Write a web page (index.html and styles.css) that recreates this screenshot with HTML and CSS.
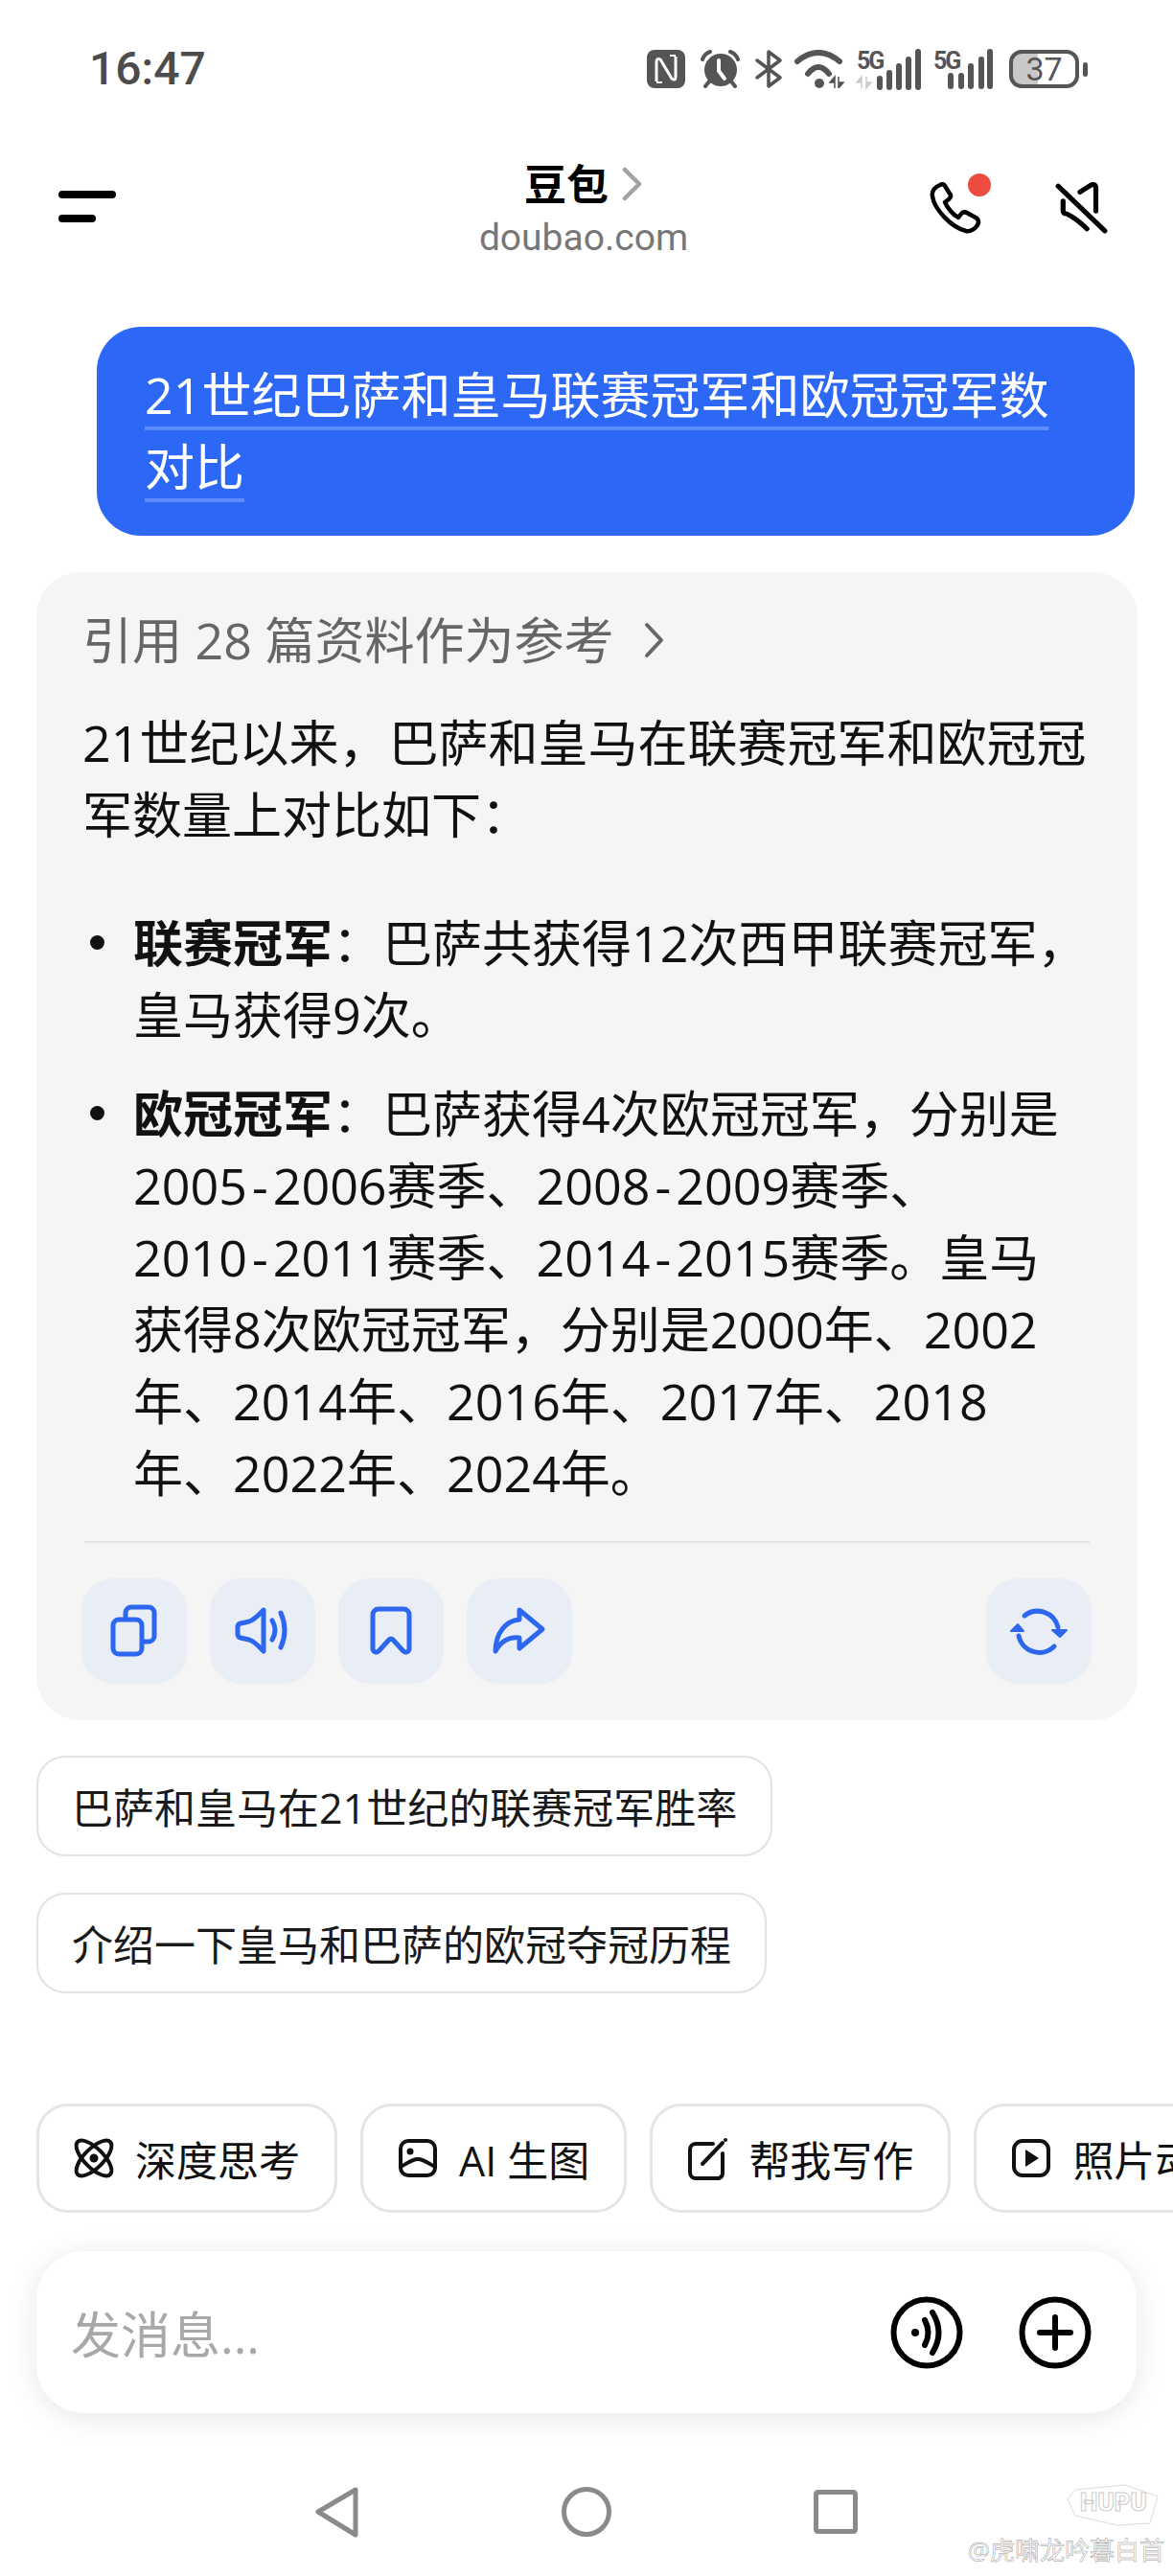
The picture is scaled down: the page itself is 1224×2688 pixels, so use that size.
FILE: index.html
```html
<!DOCTYPE html>
<html lang="zh">
<head>
    <meta charset="utf-8">
    <title>豆包</title>
    <link rel="stylesheet" href="styles.css">
</head>
<body>
    <div class="status">
        <span class="time">16:47</span>
        <div class="status-icons">
            <svg width="40" height="40" viewBox="0 0 40 40"><rect width="40" height="40" rx="8" fill="#555"/><path d="M10 33V13q0-5 4-3l12 20q4 3 4-2V7" fill="none" stroke="#fff" stroke-width="3"/><path d="M16 34h-6M24 6h6" stroke="#fff" stroke-width="2"/></svg>
            <svg width="47" height="40" viewBox="0 0 47 40"><circle cx="24" cy="21" r="17" fill="#555"/><path d="M5 10q2-6 8-8M42 10q-2-6-8-8M12 33l-4 5M35 33l4 5" fill="none" stroke="#555" stroke-width="4" stroke-linecap="round"/><path d="M22 11v11l6 8" fill="none" stroke="#fff" stroke-width="4" stroke-linecap="round"/></svg>
            <svg width="28" height="40" viewBox="0 0 28 40"><path d="M2 11l24 18-12 9V2l12 9L2 29" fill="none" stroke="#555" stroke-width="3.5" stroke-linejoin="round" stroke-linecap="round"/></svg>
            <svg width="52" height="40" viewBox="0 0 52 40"><path d="M3 12Q25-6 47 12M14 25Q25 11 36 25" fill="none" stroke="#555" stroke-width="6" stroke-linecap="round"/><circle cx="26" cy="35" r="5" fill="#555"/><path d="M42 40V28l-5 6h5M46 28v12l5-6h-5" fill="#555" stroke="#555" stroke-width="1.5"/></svg>
            <svg class="net-icon" width="67" height="40" viewBox="0 0 67 40"><text x="0" y="20" class="net">5G</text><path d="M5 40V28l-5 6h5M10 28v12l5-6h-5" fill="#ccc" stroke="#ccc" stroke-width="1.5"/><path d="M24 30v9M34 24v15M44 17v22M54 10v29M64 2v37" stroke="#555" stroke-width="6" stroke-linecap="round"/></svg>
            <svg class="net-icon" width="62" height="40" viewBox="0 0 62 40"><text x="0" y="20" class="net">5G</text><path d="M18 27v11M29 27v11M39 17v21M50 10v28M59 2v36" stroke="#555" stroke-width="6" stroke-linecap="round"/></svg>
            <div class="battery"><span>37</span></div>
            <div class="battery-nub"></div>
        </div>
    </div>

    <div class="topbar">
        <div class="menu"><span class="menu-long"></span><span class="menu-short"></span></div>
        <div class="title-box">
            <div class="title">豆包<svg width="22" height="36" viewBox="0 0 22 36"><path d="M3 3l15 15L3 33" fill="none" stroke="#a3a3a3" stroke-width="4.5" stroke-linecap="round" stroke-linejoin="round"/></svg></div>
            <div class="domain">doubao.com</div>
        </div>
        <div class="top-actions">
            <div class="phone">
                <svg width="54" height="54" viewBox="0 0 54 54"><path d="M11 3C6 5 2 9 3 15 5 28 22 47 38 51c6 1 12-4 13-9 0-3-1-4-3-5l-9-5c-2-1-4-1-6 1l-3 4C24 34 18 26 16 21l4-3c2-2 3-4 1-6L16 4c-1-2-3-2-5-1Z" fill="none" stroke="#000" stroke-width="4.5" stroke-linejoin="round"/></svg>
                <span class="red-dot"></span>
            </div>
            <svg width="56" height="56" viewBox="0 0 54 54"><path d="M3 5l47 45M25 11L36 4q5-2 5 3v23M8 20v10q0 3 4 3 10 5 20 15" fill="none" stroke="#000" stroke-width="5" stroke-linecap="round" stroke-linejoin="round"/></svg>
        </div>
    </div>

    <div class="bubble"><span class="bubble-text">21世纪巴萨和皇马联赛冠军和欧冠冠军数对比</span></div>

    <div class="card">
        <div class="refs">引用 28 篇资料作为参考<svg width="22" height="40" viewBox="0 0 22 40"><path d="M3 4l15 16L3 36" fill="none" stroke="#666" stroke-width="4" stroke-linecap="round" stroke-linejoin="round"/></svg></div>
        <p class="intro">21世纪以来&#xFF0C;巴萨和皇马在联赛冠军和欧冠冠军数量上对比如下&#xFF1A;</p>
        <ul class="answer">
            <li><b>联赛冠军</b>&#xFF1A;巴萨共获得12次西甲联赛冠军&#xFF0C;<br>皇马获得9次。</li>
            <li><b>欧冠冠军</b>&#xFF1A;巴萨获得4次欧冠冠军&#xFF0C;分别是<br>2005<span class="dash">-</span>2006赛季、2008<span class="dash">-</span>2009赛季、<br>2010<span class="dash">-</span>2011赛季、2014<span class="dash">-</span>2015赛季。皇马<br>获得8次欧冠冠军&#xFF0C;分别是2000年、2002<br>年、2014年、2016年、2017年、2018<br>年、2022年、2024年。</li>
        </ul>
        <div class="divider"></div>
        <div class="actions">
            <div class="act"><svg width="60" height="60" viewBox="0 0 60 60"><rect x="8" y="18" width="30" height="36" rx="6"/><path d="M21 15v-4a6 6 0 0 1 6-6h18a6 6 0 0 1 6 6v24a6 6 0 0 1-6 6h-6"/></svg></div>
            <div class="act"><svg width="60" height="60" viewBox="0 0 60 60"><path d="M31 8C27 12 22 18 16 20L7 22c-2 .5-3 2-3 4v7c0 2 1 3.500 3 4l9 2c6 2 11 8 15 12Z"/><path d="M40 19q6 10 0 20M49 11q8 18 0 36"/></svg></div>
            <div class="act"><svg width="60" height="60" viewBox="0 0 60 60"><path d="M11 48V13a6 6 0 0 1 6-6h26a6 6 0 0 1 6 6v35c0 4-4 5-6 3L32 39a2.500 2.500 0 0 0-4 0L17 51c-2 2-6 1-6-3Z"/></svg></div>
            <div class="act"><svg width="60" height="60" viewBox="0 0 60 60"><path d="M30 8l24 20-24 20V37C20 36 11 40 5 51 5 32 16 19 30 18Z"/></svg></div>
            <div class="act act-last"><svg width="60" height="60" viewBox="0 0 60 60"><path d="M15 14A22 22 0 0 1 50 26M46 46A22 22 0 0 1 9 35"/><path class="solid" d="M44 29h15l-7 7ZM1 30h13l-6-7Z"/></svg></div>
        </div>
    </div>

    <div class="suggest">
        <div class="suggest-chip">巴萨和皇马在21世纪的联赛冠军胜率</div>
        <div class="suggest-chip">介绍一下皇马和巴萨的欧冠夺冠历程</div>
    </div>

    <div class="tools">
        <div class="tool">
            <svg width="42" height="42" viewBox="0 0 42 42"><ellipse cx="21" cy="21" rx="10" ry="24" transform="rotate(45 21 21)"/><ellipse cx="21" cy="21" rx="10" ry="24" transform="rotate(-45 21 21)"/><circle class="fill" cx="21" cy="21" r="4.500"/></svg>
            <span>深度思考</span>
        </div>
        <div class="tool">
            <svg width="42" height="42" viewBox="0 0 42 42"><rect x="3" y="3" width="36" height="36" rx="8"/><circle class="fill" cx="13" cy="14" r="3.500"/><path d="M3 30c6-3 12-8 18-8s12 5 18 8"/></svg>
            <span>AI 生图</span>
        </div>
        <div class="tool">
            <svg width="42" height="42" viewBox="0 0 42 42"><path d="M27 6H9a6 6 0 0 0-6 6v24a6 6 0 0 0 6 6h24a6 6 0 0 0 4-6V16"/><path d="M16 27L37 5"/><circle class="fill" cx="40" cy="2" r="2"/></svg>
            <span>帮我写作</span>
        </div>
        <div class="tool">
            <svg width="42" height="42" viewBox="0 0 42 42"><rect x="3" y="3" width="36" height="36" rx="9"/><path class="fill" d="M15 12l14 9-14 9Z"/></svg>
            <span>照片动起来</span>
        </div>
    </div>

    <div class="input-box">
        <span class="placeholder">发消息...</span>
        <svg width="76" height="76" viewBox="0 0 76 76"><circle cx="38" cy="38" r="34.500" fill="none" stroke="#000" stroke-width="6"/><circle cx="26" cy="38" r="4"/><path d="M36 25q7 13 0 26M44 17q13 21 0 42" fill="none" stroke="#000" stroke-width="6" stroke-linecap="round"/></svg>
        <svg width="76" height="76" viewBox="0 0 76 76"><circle cx="38" cy="38" r="34.500" fill="none" stroke="#000" stroke-width="6"/><path d="M38 22v32M22 38h32" fill="none" stroke="#000" stroke-width="6" stroke-linecap="round"/></svg>
    </div>

    <div class="navbar">
        <svg width="60" height="60" viewBox="0 0 60 60"><path d="M49 7L10 30l39 24Z" fill="none" stroke="#8a8a8a" stroke-width="5" stroke-linejoin="round"/></svg>
        <svg width="60" height="60" viewBox="0 0 60 60"><circle cx="30" cy="30" r="23.500" fill="none" stroke="#8a8a8a" stroke-width="5"/></svg>
        <svg width="60" height="60" viewBox="0 0 60 60"><rect x="9.500" y="9.500" width="41" height="41" rx="2" fill="none" stroke="#8a8a8a" stroke-width="5"/></svg>
    </div>

    <div class="watermark">
        <svg class="hupu-logo" width="98" height="44" viewBox="0 0 98 44"><path d="M10 6L62 1l34 12-8 28-34 2-44-10L2 16Z" fill="#fff" stroke="#ddd" stroke-width="1"/><text x="50" y="28" class="hupu">HUPU</text></svg>
        <span>@虎啸龙吟暮白首</span>
    </div>
</body>
</html>
```

FILE: styles.css
```css
* {
    box-sizing: border-box;
}

body {
    font-family: "Open Sans", "Noto Sans CJK SC", sans-serif;
    background-color: #fff;
    color: #111;
    margin: 0;
    width: 1224px;
    height: 2688px;
    overflow: hidden;
    position: relative;
}

.status {
    height: 130px;
    padding: 52px 89px 0 93px;
    display: flex;
    justify-content: space-between;
    align-items: flex-start;
}

.time {
    font-family: Roboto, sans-serif;
    font-weight: 500;
    font-size: 48px;
    line-height: 40px;
    color: #4c4c4c;
}

.status-icons {
    display: flex;
    gap: 13px;
    align-items: center;
}

.net-icon {
    overflow: visible;
}

.net {
    font-family: Roboto, sans-serif;
    font-weight: 700;
    font-size: 25px;
    letter-spacing: -2px;
    fill: #555;
}

.battery {
    width: 73px;
    height: 40px;
    margin-left: 4px;
    border: 4px solid #555;
    border-radius: 13px;
    background: linear-gradient(to right, #c8c8c8 40%, #fff 40%);
    display: flex;
    align-items: center;
    justify-content: center;
}

.battery span {
    font-family: Roboto, sans-serif;
    font-size: 34px;
    line-height: 32px;
    color: #555;
}

.battery-nub {
    width: 5px;
    height: 15px;
    margin-left: -9px;
    border-radius: 3px;
    background-color: #555;
}

.topbar {
    height: 120px;
    padding: 38px 67px 0 61px;
    display: grid;
    grid-template-columns: 1fr auto 1fr;
    align-items: center;
}

.menu {
    display: flex;
    flex-direction: column;
    gap: 17px;
    margin-top: -8px;
}

.menu span {
    display: block;
    height: 8px;
    border-radius: 4px;
    background-color: #000;
}

.menu-long {
    width: 60px;
}

.menu-short {
    width: 39px;
}

.title-box {
    text-align: center;
}

.title {
    font-size: 44px;
    font-weight: 700;
    line-height: 48px;
    color: #000;
    display: flex;
    align-items: center;
    justify-content: center;
    gap: 14px;
}

.domain {
    font-family: Roboto, sans-serif;
    font-size: 39px;
    line-height: 46px;
    margin-top: 9px;
    color: #777;
}

.top-actions {
    display: flex;
    justify-content: flex-end;
    align-items: center;
    gap: 77px;
    margin-top: -6px;
}

.phone {
    position: relative;
    height: 54px;
}

.red-dot {
    position: absolute;
    left: 40px;
    top: -9px;
    width: 24px;
    height: 24px;
    border-radius: 50%;
    background-color: #ee4c40;
}

.bubble {
    margin: 91px 40px 0 101px;
    height: 218px;
    padding: 33px 50px 0;
    border-radius: 46px;
    background-color: #2d67f5;
    color: #fff;
    font-size: 52px;
    line-height: 75px;
}

.bubble-text {
    text-decoration: underline 4px #5d8cff;
    text-decoration-skip-ink: none;
    text-underline-offset: 13px;
}

.card {
    margin: 38px 37px 0 38px;
    padding: 33px 50px 38px;
    border-radius: 46px;
    background-color: #f5f5f5;
    font-size: 52px;
    line-height: 75px;
}

.refs {
    color: #666;
    display: flex;
    align-items: center;
    gap: 32px;
    margin-left: -2px;
}

.intro {
    margin: 32px 0 59px -2px;
    width: 1060px;
}

.answer {
    margin: 0 0 0 -3px;
    padding: 0 0 0 54px;
    list-style: none;
}

.answer li {
    position: relative;
    margin-bottom: 28px;
}

.answer li::before {
    content: "";
    position: absolute;
    left: -45px;
    top: 30px;
    width: 15px;
    height: 15px;
    border-radius: 50%;
    background-color: #111;
}

.answer li:last-child {
    margin-bottom: 0;
}

.dash {
    margin: 0 5px;
}

.divider {
    height: 2px;
    margin-top: 34px;
    background-color: #e3e3e3;
}

.actions {
    display: flex;
    gap: 24px;
    margin-top: 37px;
    margin-left: -3px;
}

.act {
    width: 110px;
    height: 110px;
    border-radius: 34px;
    background-color: #e8edf6;
    display: flex;
    align-items: center;
    justify-content: center;
}

.act-last {
    margin-left: auto;
    margin-right: -2px;
}

.act svg {
    fill: none;
    stroke: #2d67f0;
    stroke-width: 5;
    stroke-linecap: round;
    stroke-linejoin: round;
}

.act .solid {
    fill: #2d67f0;
    stroke-width: 2;
}

.suggest {
    margin: 37px 0 0 38px;
    display: flex;
    flex-direction: column;
    align-items: flex-start;
    gap: 38px;
}

.suggest-chip {
    height: 105px;
    padding: 0 35px;
    border: 2px solid #e2e2e2;
    border-radius: 30px;
    font-size: 43px;
    color: #1a1a1a;
    display: flex;
    align-items: center;
}

.tools {
    margin: 115px 0 0 38px;
    display: flex;
    gap: 24px;
    width: 1186px;
    overflow: hidden;
}

.tool {
    flex: none;
    height: 114px;
    padding: 0 36px;
    border: 3px solid #e5e5e5;
    border-radius: 33px;
    font-size: 43px;
    color: #111;
    display: flex;
    align-items: center;
    gap: 22px;
}

.tool svg {
    fill: none;
    stroke: #111;
    stroke-width: 4;
    stroke-linecap: round;
    overflow: visible;
}

.tool .fill {
    fill: #111;
    stroke: none;
}

.input-box {
    margin: 40px 38px 0;
    height: 169px;
    padding: 0 47px 0 36px;
    border-radius: 50px;
    background-color: #fff;
    box-shadow: 0 4px 30px rgba(0, 0, 0, 0.1);
    display: flex;
    align-items: center;
    gap: 58px;
}

.placeholder {
    flex: 1;
    font-size: 52px;
    color: #a8a8a8;
}

.navbar {
    margin-top: 73px;
    display: flex;
    justify-content: center;
    gap: 200px;
}

.watermark {
    position: absolute;
    right: 9px;
    bottom: 12px;
    display: flex;
    flex-direction: column;
    align-items: flex-end;
    gap: 10px;
    font-size: 26px;
    line-height: 30px;
    color: #fff;
    -webkit-text-stroke: 0.5px #999;
}

.hupu-logo {
    margin-right: 5px;
}

.hupu {
    font-family: Roboto, sans-serif;
    font-weight: 900;
    font-size: 26px;
    text-anchor: middle;
    fill: #fff;
    stroke: #ccc;
    stroke-width: 1;
    -webkit-text-stroke: 0;
}
```
